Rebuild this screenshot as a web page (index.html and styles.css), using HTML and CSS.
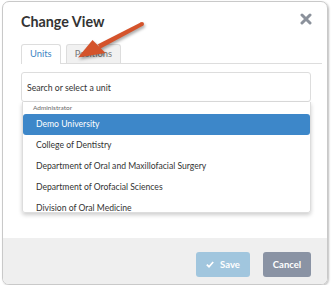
FILE: index.html
```html
<!DOCTYPE html>
<html lang="en">
<head>
  <meta charset="UTF-8" />
  <title>Change View</title>
  <link rel="stylesheet" href="styles.css">
</head>
<body>
  <div class="modal">
    <div class="modal-body">
      <div class="modal-head">
        <h2>Change View</h2>
        <button class="close-btn" aria-label="Close">
          <svg width="12" height="12" viewBox="0 0 12 12"><path d="M2 2 L10 10 M10 2 L2 10" stroke="#8b919b" stroke-width="3" stroke-linecap="round"/></svg>
        </button>
      </div>

      <ul class="tabs">
        <li class="active">Units</li>
        <li>Positions</li>
      </ul>

      <div class="picker">
        <div class="search">Search or select a unit</div>
        <div class="menu">
          <div class="group">Administrator</div>
          <div class="opt selected">Demo University</div>
          <div class="opt">College of Dentistry</div>
          <div class="opt">Department of Oral and Maxillofacial Surgery</div>
          <div class="opt">Department of Orofacial Sciences</div>
          <div class="opt">Division of Oral Medicine</div>
        </div>
      </div>
    </div>

    <div class="modal-foot">
      <button class="btn save">
        <svg width="8" height="7" viewBox="0 0 8 7"><path d="M0.8 3.6 L3 5.7 L7.2 1" fill="none" stroke="#fff" stroke-width="1.7"/></svg>
        Save
      </button>
      <button class="btn cancel">Cancel</button>
    </div>
  </div>

  <!-- callout arrow pointing at the Positions tab -->
  <svg class="arrow" width="160" height="70" viewBox="0 0 160 70">
    <polygon points="100.1,48.7 97.9,44.3 141.1,22.2 142.9,25.8" fill="#d4532b"/>
    <circle cx="142" cy="24" r="2" fill="#d4532b"/>
    <polygon points="78,57.5 105.5,53 92.5,40" fill="#d4532b"/>
  </svg>
</body>
</html>
```

FILE: styles.css
```css
html, body {
  margin: 0;
  padding: 0;
  background: #fff;
  font-family: Lato, "Open Sans", sans-serif;
  color: #333;
}

.modal {
  margin: 1px 0 0 2px;
  width: 324px;
  height: 282px;
  border: 1px solid #c9c9c9;
  border-radius: 7px;
  box-shadow: 1px 1px 2px rgba(0,0,0,0.25);
  display: flex;
  flex-direction: column;
  overflow: hidden;
}

.modal-body {
  flex: 1;
  padding: 11px 5px 0 18px;
}

.modal-head {
  display: flex;
  justify-content: space-between;
  align-items: flex-start;
  padding-right: 10px;
}

.modal-head h2 {
  margin: 0;
  font-size: 14.3px;
  line-height: 18px;
  font-weight: bold;
  color: #333;
}

.close-btn {
  border: none;
  background: none;
  padding: 0;
  margin-top: 0;
  width: 12px;
  height: 12px;
}

.tabs {
  list-style: none;
  margin: 13px 0 0;
  padding: 0;
  display: flex;
  gap: 5px;
  border-bottom: 1px solid #ddd;
}

.tabs li {
  height: 18px;
  line-height: 18px;
  padding: 0 8px;
  font-size: 9.4px;
  color: #777;
  border: 1px solid #ddd;
  border-bottom: none;
  border-radius: 3px 3px 0 0;
  background: #f1f1f1;
}

.tabs li.active {
  background: #fff;
  color: #3d86c4;
  height: 19px;
  margin-bottom: -1px;
}

.picker {
  margin: 8px 11px 0 0;
}

.search {
  height: 28px;
  line-height: 29px;
  border: 1px solid #ddd;
  border-radius: 3px;
  padding-left: 5px;
  font-size: 8.7px;
  color: #333;
}

.menu {
  margin-left: 1px;
  height: 110px;
  overflow: hidden;
  border: 1px solid #ddd;
  border-top: none;
  border-radius: 0 0 3px 3px;
  box-shadow: 0 2px 4px rgba(0,0,0,0.2);
}

.group {
  height: 12px;
  line-height: 12px;
  padding-left: 10px;
  font-size: 6.5px;
  color: #666;
}

.opt {
  height: 21px;
  line-height: 21px;
  padding-left: 13px;
  font-size: 8.6px;
  color: #333;
}

.opt.selected {
  background: #3d87c9;
  color: #fff;
  border-radius: 3px;
}

.modal-foot {
  height: 46px;
  background: #efefef;
  display: flex;
  justify-content: flex-end;
  align-items: flex-start;
  gap: 13px;
  padding: 14px 16px 0 0;
  box-sizing: border-box;
}

.btn {
  height: 25px;
  border: none;
  border-radius: 3px;
  color: #fff;
  font-family: Lato, sans-serif;
  font-size: 9.5px;
  font-weight: bold;
  display: flex;
  align-items: center;
  justify-content: center;
  gap: 6px;
  padding: 0;
}

.btn.save {
  width: 54px;
  background: #a1c6de;
}

.btn.cancel {
  width: 48px;
  background: #8a93a4;
}

.arrow {
  position: absolute;
  top: 0;
  left: 0;
  filter: drop-shadow(1px 2px 1.5px rgba(0,0,0,0.35));
}
```
